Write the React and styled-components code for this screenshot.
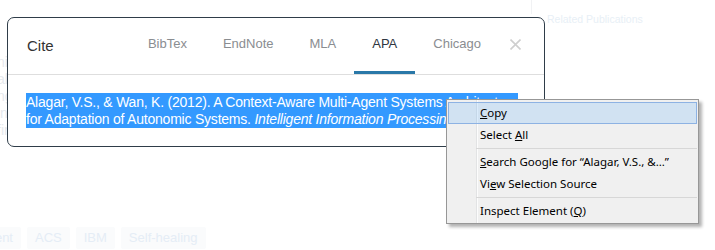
import React from 'react'
import styled, { createGlobalStyle } from 'styled-components'

const GlobalStyle = createGlobalStyle`
  body {
    margin: 0;
    background: #fff;
    overflow: hidden;
  }
`

const Page = styled.div`
  position: relative;
  width: 715px;
  height: 250px;
  overflow: hidden;
  font-family: 'Liberation Sans', Arial, sans-serif;
`

const Backdrop = styled.div`
  display: grid;
  grid-template-columns: 531px 1fr;
  height: 250px;
`

const MainCol = styled.div`
  display: flex;
  flex-direction: column;
  overflow: hidden;
`

const BgText = styled.div`
  padding-top: 54px;
  margin-left: -3px;
  font-size: 14px;
  line-height: 17px;
  color: #e6e9ed;
`

const BgLine = styled.div`
  white-space: nowrap;
`

const TagRow = styled.div`
  display: flex;
  gap: 6px;
  margin-top: auto;
  margin-left: -29px;
  margin-bottom: 1px;
`

const Tag = styled.span`
  height: 22px;
  padding: 0 8px;
  font-size: 13px;
  line-height: 22px;
  color: #e5edf6;
  background: #fafbfc;
  border-radius: 2px;
  white-space: nowrap;
`

const Sidebar = styled.div`
  display: flex;
  flex-direction: column;
`

const SideRule = styled.div`
  width: 1px;
  height: 14px;
  background: #f1f2f4;
`

const SideHeading = styled.div`
  margin-left: 16px;
  font-size: 10.5px;
  line-height: 10px;
  color: #e8eff6;
`

const Modal = styled.div`
  position: absolute;
  left: 7px;
  top: 17px;
  width: 538px;
  height: 130px;
  box-sizing: border-box;
  border: 1px solid #2f3d49;
  border-radius: 7px;
  background: #fff;
  overflow: hidden;
`

const Header = styled.div`
  display: flex;
  align-items: flex-start;
  height: 56px;
  padding: 0 18px 0 19px;
  border-bottom: 1px solid #dedede;
`

const Title = styled.div`
  flex: 1;
  padding-top: 20px;
  font-size: 15px;
  line-height: 16px;
  color: #333;
`

const Tabs = styled.div`
  display: flex;
`

const Tab = styled.div`
  height: 56px;
  box-sizing: border-box;
  padding: 18px 18px 0;
  font-size: 13px;
  line-height: 16px;
  color: ${p => (p.$active ? '#2f3640' : '#8a8d91')};
  border-bottom: 3px solid ${p => (p.$active ? '#2a78a8' : 'transparent')};
`

const Close = styled.div`
  display: flex;
  align-items: center;
  justify-content: center;
  width: 21px;
  height: 21px;
  margin: 16px 0 0 6px;
`

const Body = styled.div`
  padding: 19px 18px 0;
  font-size: 14px;
  line-height: 17px;
  letter-spacing: -0.22px;
  color: #333;
`

const Selected = styled.span`
  background: #3399ff;
  color: #fff;
  padding: 1px 0;
`

const Menu = styled.div`
  position: absolute;
  left: 446px;
  top: 99px;
  width: 253px;
  box-sizing: border-box;
  padding: 2px 1px 1px;
  border: 1px solid #979797;
  background: #f0f0f0 linear-gradient(to right, transparent 29px, #e2e3e4 29px, #e2e3e4 30px, #fcfcfc 30px, #fcfcfc 31px, transparent 31px);
  box-shadow: 3px 3px 3px rgba(0, 0, 0, 0.3);
  font-family: 'Noto Sans', 'Open Sans', sans-serif;
  font-size: 11.5px;
  color: #000;
`

const Item = styled.div`
  height: 22px;
  box-sizing: border-box;
  padding-left: 31px;
  border: 1px solid ${p => (p.$hover ? '#8db2e3' : 'transparent')};
  background: ${p => (p.$hover ? 'rgba(51, 153, 255, 0.16)' : 'transparent')};
  line-height: 20px;
  white-space: nowrap;
`

const Key = styled.span`
  text-decoration: underline;
`

const Separator = styled.div`
  height: 5px;
  margin-left: 28px;
  box-sizing: border-box;
  padding-top: 2px;

  &::after {
    content: '';
    display: block;
    height: 1px;
    background: #d7d7d7;
  }
`

const CloseIcon = () => (
  <svg width="11" height="11" viewBox="0 0 11 11">
    <path d="M0.5 0.5 L10.5 10.5 M10.5 0.5 L0.5 10.5" stroke="#cfcfcf" strokeWidth="1.6" fill="none" />
  </svg>
)

const tabs = ['BibTex', 'EndNote', 'MLA', 'APA', 'Chicago']
const bgLines = ['nization of distributed', 'al autonomic managers', 'ng of the agents in', 'in the proposed framework', 'fined context model']
const tags = ['Agent', 'ACS', 'IBM', 'Self-healing']

const App = () => {
  return (
    <Page>
      <GlobalStyle />
      <Backdrop>
        <MainCol>
          <BgText>
            {bgLines.map(line => <BgLine key={line}>{line}</BgLine>)}
          </BgText>
          <TagRow>
            {tags.map(tag => <Tag key={tag}>{tag}</Tag>)}
          </TagRow>
        </MainCol>
        <Sidebar>
          <SideRule />
          <SideHeading>Related Publications</SideHeading>
        </Sidebar>
      </Backdrop>

      <Modal>
        <Header>
          <Title>Cite</Title>
          <Tabs>
            {tabs.map(tab => <Tab key={tab} $active={tab === 'APA'}>{tab}</Tab>)}
          </Tabs>
          <Close><CloseIcon /></Close>
        </Header>
        <Body>
          <Selected>
            Alagar, V.S., &amp; Wan, K. (2012). A Context-Aware Multi-Agent Systems Architecture for Adaptation of Autonomic Systems. <i>Intelligent Information Processing VI</i>.
          </Selected>
        </Body>
      </Modal>

      <Menu>
        <Item $hover><Key>C</Key>opy</Item>
        <Item>Select <Key>A</Key>ll</Item>
        <Separator />
        <Item><Key>S</Key>earch Google for “Alagar, V.S., &amp;…”</Item>
        <Item>Vi<Key>e</Key>w Selection Source</Item>
        <Separator />
        <Item>Inspect Element (<Key>Q</Key>)</Item>
      </Menu>
    </Page>
  )
}

export default App
